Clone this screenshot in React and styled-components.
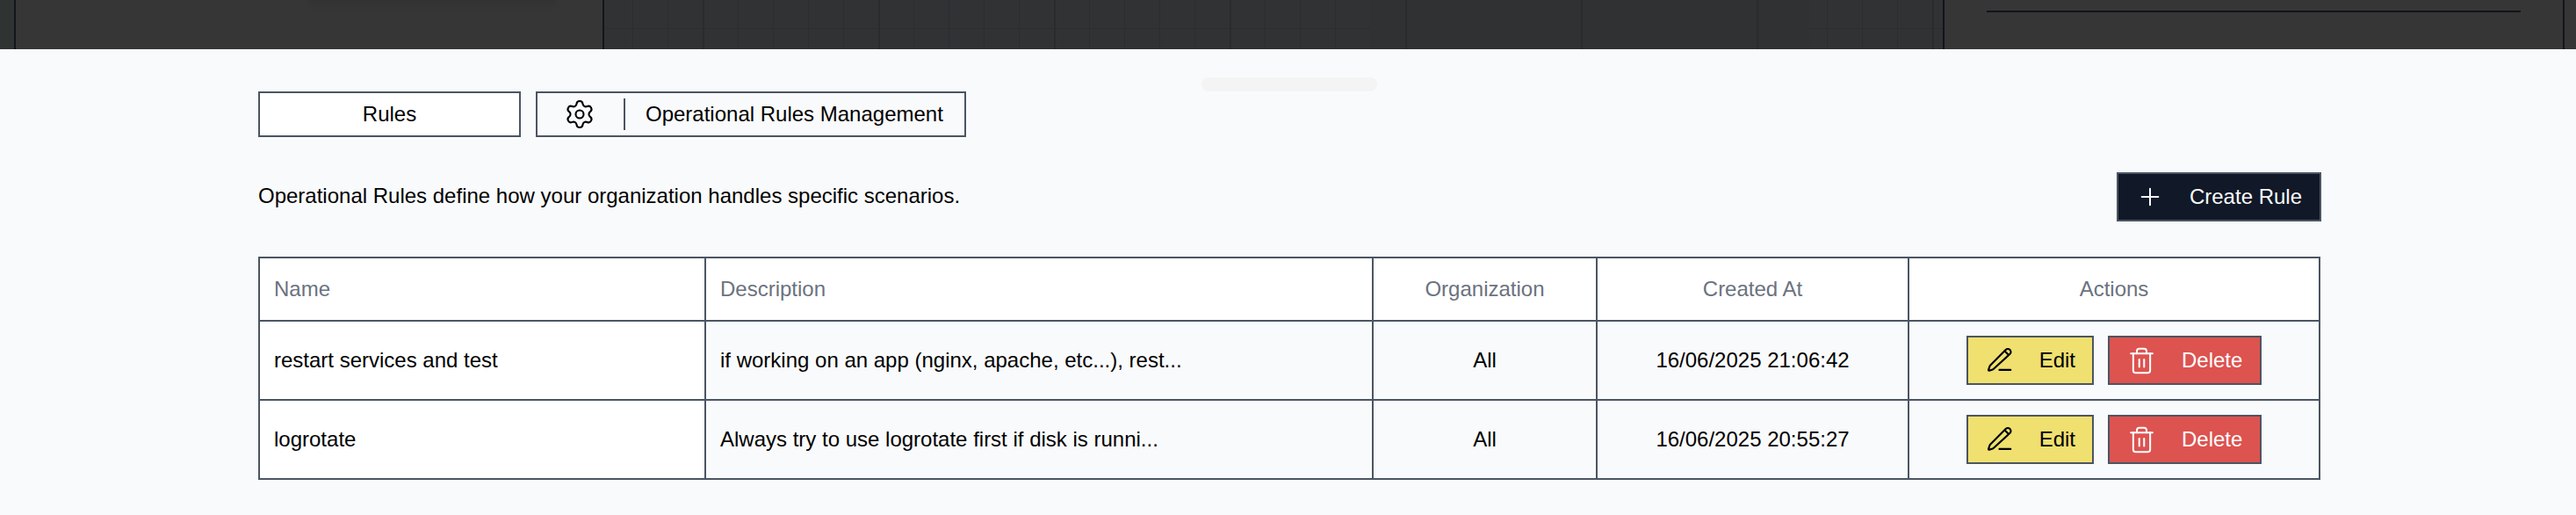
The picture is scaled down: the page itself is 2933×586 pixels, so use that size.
import styled, { createGlobalStyle } from 'styled-components';
import { Plus, Settings, Trash2 } from 'lucide-react';

const GlobalStyle = createGlobalStyle`
  html, body {
    margin: 0;
    height: 586px;
    overflow: hidden;
    background: #f9fafb;
    font-family: "Liberation Sans", Arial, sans-serif;
    color: #000;
  }
  * {
    box-sizing: border-box;
  }
`;

const colors = {
  border: '#4b5563',
  ink: '#111827',
  muted: '#6b7280',
  edge: '#14141c',
};

/* the dimmed graph editor that shows above the drawer */
const Backdrop = styled.div`
  display: flex;
  height: 56px;
  background: #363636;
`;
const Rail = styled.div`
  width: 16px;
  background: #2f3332;
`;
const SidePanel = styled.div`
  width: ${props => props.$width}px;
  flex-shrink: 0;
  border-left: 2px solid ${colors.edge};
`;
const NodeStub = styled.div`
  width: 280px;
  height: 5px;
  margin-left: 334px;
  background: #333;
  box-shadow: 0 2px 6px rgba(0, 0, 0, 0.06);
`;
const PanelRule = styled.div`
  width: 608px;
  height: 2px;
  margin: 12px 0 0 48px;
  background: ${colors.edge};
`;
const Canvas = styled.div`
  width: 1526px;
  flex-shrink: 0;
  border-left: 2px solid ${colors.edge};
  background-color: #303234;
  background-image:
    linear-gradient(to right, #2a2b2c 2px, transparent 2px),
    linear-gradient(to right, transparent 872px, #303132 872px, #303132 1372px, transparent 1372px),
    linear-gradient(to right, #2c2d2f 1px, transparent 1px),
    linear-gradient(to bottom, #2c2d2f 1px, transparent 1px);
  background-size: 200px 100%, 100% 100%, 40px 100%, 100% 40px;
  background-position: 112px 0, 0 0, 32px 0, 0 32px;
`;
const Tail = styled.div`
  flex: 1;
  border-left: 2px solid ${colors.edge};
`;

const Drawer = styled.div`
  padding: 32px 293px 40px 294px;
`;
const Handle = styled.div`
  width: 200px;
  height: 16px;
  margin-left: 1074px;
  border-radius: 8px;
  background: #f4f4f4;
`;

const Tabs = styled.div`
  display: flex;
  gap: 17px;
`;
const Tab = styled.div`
  display: flex;
  align-items: center;
  justify-content: ${props => (props.$active ? 'center' : 'flex-start')};
  width: ${props => props.$width}px;
  height: 52px;
  padding-left: ${props => (props.$active ? 0 : 30)}px;
  border: 2px solid ${colors.border};
  background: ${props => (props.$active ? '#fff' : '#f9fafb')};
  font-size: 24px;
  white-space: nowrap;
  svg {
    flex-shrink: 0;
  }
`;
const TabDivider = styled.span`
  flex-shrink: 0;
  width: 2px;
  height: 36px;
  margin: 0 23px 0 32px;
  background: ${colors.border};
`;

const Intro = styled.div`
  display: flex;
  align-items: center;
  justify-content: space-between;
  margin: 40px -3px 0 0;
`;
const IntroText = styled.p`
  margin: 0 0 3px;
  font-size: 24px;
  line-height: 32px;
`;

const Button = styled.button`
  display: inline-flex;
  align-items: center;
  gap: 29px;
  height: 56px;
  padding: 0 ${props => props.$right}px 0 20px;
  border: 2px solid ${colors.border};
  border-radius: 0;
  background: ${props => props.$bg};
  color: ${props => props.$fg};
  font-family: inherit;
  font-size: 24px;
  svg {
    flex-shrink: 0;
  }
`;

const Table = styled.table`
  width: 2346px;
  margin-top: 40px;
  border-collapse: collapse;
  table-layout: fixed;
  font-size: 24px;
`;
const Th = styled.th`
  height: 72px;
  padding: 0 16px;
  border: 2px solid ${colors.border};
  background: #fff;
  color: ${colors.muted};
  font-weight: 400;
  text-align: ${props => (props.$center ? 'center' : 'left')};
`;
const Td = styled.td`
  height: 90px;
  padding: 0 16px;
  border: 2px solid ${colors.border};
  background: ${props => (props.$first ? '#fff' : '#f9fafb')};
  text-align: ${props => (props.$center ? 'center' : 'left')};
  white-space: nowrap;
`;
const Actions = styled.div`
  display: flex;
  justify-content: center;
  gap: 16px;
`;

const columns = [508, 760, 255, 355, 468];

const rules = [
  {
    name: 'restart services and test',
    description: 'if working on an app (nginx, apache, etc...), rest...',
    organization: 'All',
    createdAt: '16/06/2025 21:06:42',
  },
  {
    name: 'logrotate',
    description: 'Always try to use logrotate first if disk is runni...',
    organization: 'All',
    createdAt: '16/06/2025 20:55:27',
  },
];

function EditIcon() {
  return (
    <svg width="32" height="32" viewBox="0 0 24 24" fill="none" stroke="currentColor" strokeWidth="1.6" strokeLinecap="round" strokeLinejoin="round">
      <path d="M20.6 6.6a1 1 0 0 0-3.6-3.6L3.8 16.4a2 2 0 0 0-.5.8l-1 3a.5.5 0 0 0 .6.6l3-1a2 2 0 0 0 .8-.5z" />
      <path d="m16.2 4.2 3.2 3.2" />
      <path d="M11.6 20.2h9.6" />
    </svg>
  );
}

export default function App() {
  return (
    <>
      <GlobalStyle />
      <Backdrop>
        <Rail />
        <SidePanel $width={670}>
          <NodeStub />
        </SidePanel>
        <Canvas />
        <SidePanel $width={706}>
          <PanelRule />
        </SidePanel>
        <Tail />
      </Backdrop>

      <Drawer>
        <Handle />
        <Tabs>
          <Tab $active $width={299}>Rules</Tab>
          <Tab $width={490}>
            <Settings size={36} strokeWidth={1.4} />
            <TabDivider />
            Operational Rules Management
          </Tab>
        </Tabs>

        <Intro>
          <IntroText>Operational Rules define how your organization handles specific scenarios.</IntroText>
          <Button $bg={colors.ink} $fg="#f9fafb" $right={20}>
            <Plus size={32} strokeWidth={1.5} />
            Create Rule
          </Button>
        </Intro>

        <Table>
          <colgroup>
            {columns.map(width => <col key={width} width={width} />)}
          </colgroup>
          <thead>
            <tr>
              <Th>Name</Th>
              <Th>Description</Th>
              <Th $center>Organization</Th>
              <Th $center>Created At</Th>
              <Th $center>Actions</Th>
            </tr>
          </thead>
          <tbody>
            {rules.map(rule => (
              <tr key={rule.name}>
                <Td $first>{rule.name}</Td>
                <Td>{rule.description}</Td>
                <Td $center>{rule.organization}</Td>
                <Td $center>{rule.createdAt}</Td>
                <Td $center>
                  <Actions>
                    <Button $bg="#efe070" $fg="#000" $right={19}>
                      <EditIcon />
                      Edit
                    </Button>
                    <Button $bg="#dc5350" $fg="#fff" $right={20}>
                      <Trash2 size={33} strokeWidth={1.5} />
                      Delete
                    </Button>
                  </Actions>
                </Td>
              </tr>
            ))}
          </tbody>
        </Table>
      </Drawer>
    </>
  );
}
